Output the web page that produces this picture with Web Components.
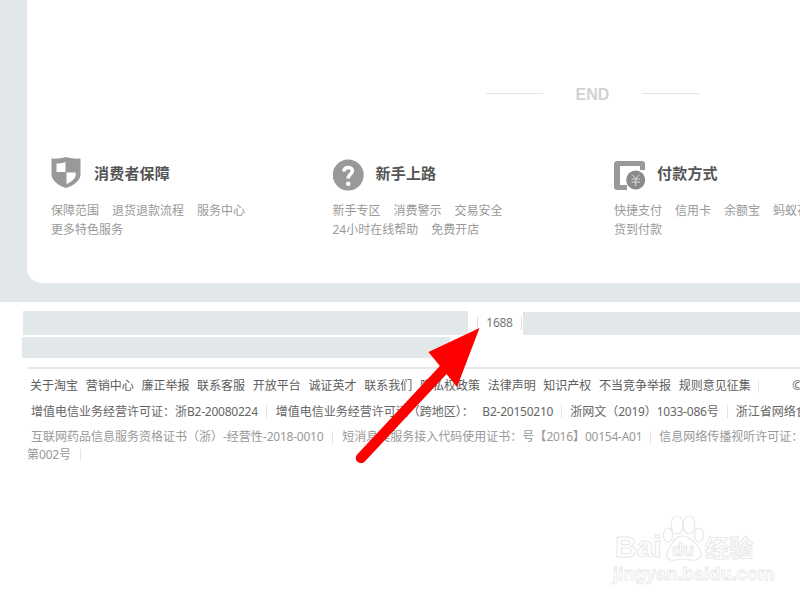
<!DOCTYPE html>
<html lang="zh"><head><meta charset="utf-8"><title>Footer</title>
<style>
html,body{margin:0;padding:0;background:#fff;width:800px;height:600px;overflow:hidden}
body{font:12px/18px "Noto Sans","Noto Sans CJK SC",sans-serif;color:#666;position:relative}
</style></head><body>
<x-hero>
  <x-end></x-end>
  <x-services>
    <x-service heading="消费者保障" icon="shield">
      <span>保障范围</span><span>退货退款流程</span><span>服务中心</span><span>更多特色服务</span>
    </x-service>
    <x-service heading="新手上路" icon="help">
      <span>新手专区</span><span>消费警示</span><span>交易安全</span><span>24小时在线帮助</span><span>免费开店</span>
    </x-service>
    <x-service heading="付款方式" icon="pay">
      <span>快捷支付</span><span>信用卡</span><span>余额宝</span><span>蚂蚁花呗</span><span>货到付款</span>
    </x-service>
  </x-services>
</x-hero>
<x-friends></x-friends>
<x-legal></x-legal>
<x-arrow></x-arrow>
<x-watermark></x-watermark>
<script>
const el=(name,css,html)=>customElements.define(name,class extends HTMLElement{
  connectedCallback(){ if(this.shadowRoot)return; const r=this.attachShadow({mode:'open'}); r.innerHTML='<style>'+css+'</style>'+(typeof html==='function'?html(this):html); }
});
el('x-hero',':host{display:block;height:302px;background:#e2e8ea;padding-left:27px;box-sizing:border-box}'+
 '.card{height:283px;background:#fff;border-bottom-left-radius:15px;display:flex;flex-direction:column;overflow:hidden}',
 '<div class="card"><slot></slot></div>');
el('x-end',':host{display:flex;align-items:center;height:20px;margin-top:85px;padding-left:459px}'+
 'i{display:block;width:57px;height:1px;background:#e4e4e4;margin-top:-4px}b{width:99px;text-align:center;font:bold 16px/20px "Liberation Sans",sans-serif;color:#d2d2d2}',
 '<i></i><b>END</b><i></i>');
el('x-services',':host{display:flex;margin-top:52px;padding-left:24px}','<slot></slot>');
const icons={
 shield:'<svg width="30" height="32" viewBox="0 0 30 32"><path fill="#999" d="M15 0C10 1.600 5 1.800 .5 1.600V17.500C.5 23.500 8 29 15 31 22 29 29.500 23.500 29.500 17.500V1.600C25 1.800 20 1.600 15 0Z"/><path fill="#fff" d="M5.500 6.500c3 0 6-.3 9-1.500v10h-9zM15.500 15.500h9.200v2.500c0 3.500-4.500 7-9.200 9z"/></svg>',
 help:'<svg width="32" height="34" viewBox="0 0 32 34"><circle cx="15.200" cy="18" r="15.500" fill="#999"/><path fill="none" stroke="#fff" stroke-width="3.600" d="M11 14.500c0-2.800 1.800-4 4.200-4s4.200 1.300 4.200 3.500c0 3-4.200 3.200-4.200 7.500"/><circle cx="15.200" cy="26.700" r="2.300" fill="#fff"/></svg>',
 pay:'<svg width="32" height="34" viewBox="0 0 32 34"><path fill="#999" d="M3 4h25a3 3 0 0 1 3 3v6H26V9H6v19h7v5H3a3 3 0 0 1-3-3V7a3 3 0 0 1 3-3Z"/><circle cx="21.700" cy="23" r="9.500" fill="#8a8a8a"/><path fill="none" stroke="#ddd" stroke-width="1" d="M18 17.500l3.700 4 3.700-4M17.500 22h8.400M17.500 25h8.400M21.700 21.500v7.500"/></svg>'
};
el('x-service',':host{display:block;width:281.500px;flex:none}'+
 'header{display:flex;align-items:flex-start;height:34px}svg{display:block;flex:none}'+
 '.ic{width:43px;flex:none}h3{margin:6px 0 0;font:bold 15px/20px "Noto Sans CJK SC",sans-serif;color:#555;letter-spacing:.2px}'+
 '.links{display:flex;flex-wrap:wrap;column-gap:13px;width:222px;margin-top:11px;color:#999;line-height:18.500px;white-space:nowrap}'+
 '::slotted(span){display:block}',
 h=>`<header><div class="ic">${icons[h.getAttribute('icon')]}</div><h3>${h.getAttribute('heading')}</h3></header><div class="links"><slot></slot></div>`);
el('x-friends',':host{display:block;margin-top:9px;height:47px}'+
 '.r1{display:flex;align-items:center;height:24px;margin-left:23px;white-space:nowrap}'+
 '.bar{background:#e2e8ea;flex:none}.a{width:445px;height:24px}.c{flex:1;height:23px;margin-top:1px}'+
 '.sep{width:1px;height:13px;background:#e4dcd8;flex:none}.num{width:43px;text-align:center;color:#777;flex:none;font-size:12px;letter-spacing:-.25px}'+
 '.b{width:428px;height:21px;margin:2px 0 0 22px}',
 '<div class="r1"><div class="bar a"></div><div class="sep" style="margin-left:9px"></div><div class="num">1688</div><div class="sep"></div><div class="bar c" style="margin-left:1px"></div></div><div class="bar b"></div>');
const link=a=>a.map(t=>`<span>${t}</span>`).join('');
const n=t=>`<b>${t}</b>`;
el('x-legal',':host{display:block;margin:9px 0 0 27px;border-top:2px solid #e8e8e8;white-space:nowrap;overflow:hidden}'+
 'b{font-weight:400;letter-spacing:-.24px}'+
 '.row{display:flex;height:25.500px;align-items:center;padding-left:4px}.row span{flex:none}'+
 '.r1{gap:7.700px;padding-left:3px;margin-top:4px;height:26px;color:#5c5c5c}.r2{color:#666}.r3{color:#999}.r4{color:#999;padding-left:0;height:10px}'+
 '.s{width:1px;height:13px;background:#e3e3e8;margin:0 9px;flex:none}.t{margin:0 8.500px}.u{margin:0 8px}',
 `<div class="row r1">${link(['关于淘宝','营销中心','廉正举报','联系客服','开放平台','诚证英才','联系我们','隐私权政策','法律声明','知识产权','不当竞争举报','规则意见征集'])}<i class="s" style="margin:0"></i><span style="margin-left:25px">© 2003</span></div>
 <div class="row r2"><span>增值电信业务经营许可证：浙${n('B2-20080224')}</span><i class="s t"></i><span>增值电信业务经营许可证（跨地区）：</span><span style="margin-left:8.500px">${n('B2-20150210')}</span><i class="s u"></i><span>浙网文（${n('2019')}）${n('1033-086')}号</span><i class="s u"></i><span>浙江省网络食品交易第三方平台</span></div>
 <div class="row r3"><span>互联网药品信息服务资格证书（浙）-经营性-${n('2018-0010')}</span><i class="s"></i><span>短消息类服务接入代码使用证书：号【${n('2016')}】${n('00154-A01')}</span><i class="s u"></i><span>信息网络传播视听许可证：1109364号</span></div>
 <div class="row r4"><span>第${n('002')}号</span><i class="s"></i></div>`);
el('x-arrow',':host{position:absolute;left:0;top:0;width:800px;height:600px;pointer-events:none}svg{display:block}',
 '<svg width="800" height="600"><path d="M361 458 446 367" stroke="#f00" stroke-width="10.500" stroke-linecap="round" fill="none"/><path fill="#f00" d="M479.500 328 428.500 352 457 387Z"/></svg>');
el('x-watermark',':host{position:absolute;left:613px;top:514px;width:187px;height:86px;color:#fff;pointer-events:none}'+
 'div{position:absolute;white-space:nowrap;-webkit-text-stroke:1px #e8e8e8;color:#fff}'+
 '.bai{left:2px;top:13px;font:bold 30px/40px "Liberation Sans",sans-serif}'+
 '.du{left:59px;top:23px;font:bold 18px/26px "Liberation Sans",sans-serif}'+
 '.jy{left:92px;top:18px;font:bold 24px/30px "Noto Sans CJK SC",sans-serif}'+
 '.url{left:0;top:49px;font:bold 18px/22px "Liberation Sans",sans-serif;letter-spacing:.2px;-webkit-text-stroke:.8px #e8e8e8}'+
 'svg{position:absolute;left:50px;top:1px}',
 '<svg width="44" height="48" viewBox="0 0 44 48" fill="none" stroke="#e8e8e8" stroke-width="1.200"><ellipse cx="14" cy="10" rx="6" ry="9"/><ellipse cx="26" cy="10" rx="6" ry="9"/><ellipse cx="5" cy="20" rx="4.500" ry="7"/><ellipse cx="36" cy="20" rx="4.500" ry="7"/><path d="M8 30c3-6 8-9 12-9s10 4 14 9c5 6 6 13-1 15-5 1-8-1-13-1s-8 2-13 1C1 44 4 36 8 30Z"/></svg><div class="bai">Bai</div><div class="du">du</div><div class="jy">经验</div><div class="url">jingyan.baidu.com</div>');
</script>
</body></html>
